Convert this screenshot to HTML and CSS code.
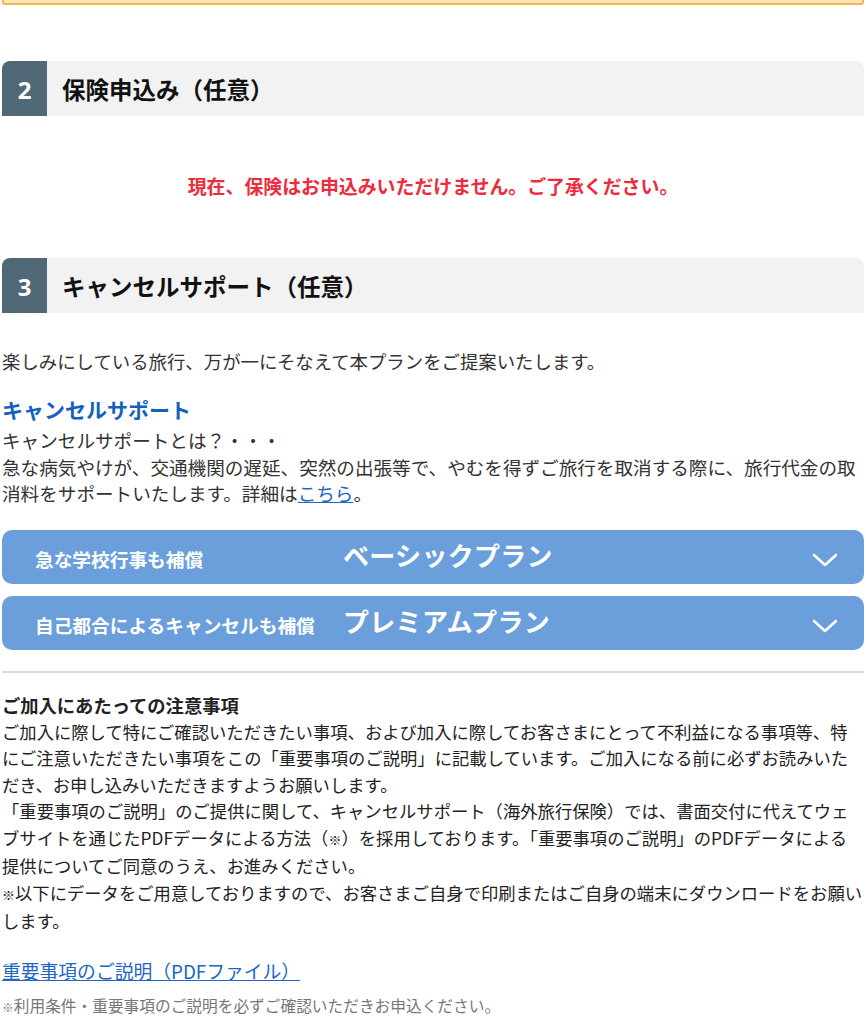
FILE: index.html
```html
<!DOCTYPE html>
<html lang="ja">
<head>
<meta charset="utf-8">
<link rel="stylesheet" href="styles.css">
</head>
<body>
<div class="prev-box"></div>

<div class="sec-head sec-first">
  <div class="sec-num">2</div>
  <div class="sec-title">保険申込み（任意）</div>
</div>

<p class="alert">現在、保険はお申込みいただけません。ご了承ください。</p>

<div class="sec-head">
  <div class="sec-num">3</div>
  <div class="sec-title">キャンセルサポート（任意）</div>
</div>

<p class="lead">楽しみにしている旅行、万が一にそなえて本プランをご提案いたします。</p>

<h3 class="sub-title">キャンセルサポート</h3>
<p class="body-text">キャンセルサポートとは？・・・<br>急な病気やけが、交通機関の遅延、突然の出張等で、やむを得ずご旅行を取消する際に、旅行代金の取消料をサポートいたします。詳細は<a class="link" href="#">こちら</a>。</p>

<div class="plans">
  <div class="plan">
    <span class="plan-label">急な学校行事も補償</span>
    <span class="plan-name">ベーシックプラン</span>
    <svg class="chev" width="26" height="14" viewBox="0 0 26 14"><polyline points="2,2 13,12 24,2" fill="none" stroke="#fff" stroke-width="2.6" stroke-linecap="round" stroke-linejoin="round"/></svg>
  </div>
  <div class="plan">
    <span class="plan-label">自己都合によるキャンセルも補償</span>
    <span class="plan-name">プレミアムプラン</span>
    <svg class="chev" width="26" height="14" viewBox="0 0 26 14"><polyline points="2,2 13,12 24,2" fill="none" stroke="#fff" stroke-width="2.6" stroke-linecap="round" stroke-linejoin="round"/></svg>
  </div>
</div>

<hr class="divider">

<div class="notes">
  <p class="notes-title">ご加入にあたっての注意事項</p>
  <p class="notes-body">ご加入に際して特にご確認いただきたい事項、および加入に際してお客さまにとって不利益になる事項等、特<br>にご注意いただきたい事項をこの「重要事項のご説明」に記載しています。ご加入になる前に必ずお読みいた<br>だき、お申し込みいただきますようお願いします。<br>「重要事項のご説明」のご提供に関して、キャンセルサポート（海外旅行保険）では、書面交付に代えてウェ<br>ブサイトを通じたPDFデータによる方法（<span class="kome">※</span>）を採用しております。「重要事項のご説明」のPDFデータによる<br>提供についてご同意のうえ、お進みください。<br><span class="kome">※</span>以下にデータをご用意しておりますので、お客さまご自身で印刷またはご自身の端末にダウンロードをお願い<br>します。</p>
</div>

<p class="pdf"><a class="link" href="#">重要事項のご説明（PDFファイル）</a></p>
<p class="foot-note"><span class="kome">※</span>利用条件・重要事項のご説明を必ずご確認いただきお申込ください。</p>
</body>
</html>
```

FILE: styles.css
```css
html, body {
  margin: 0;
  padding: 0;
  background: #fff;
}
body {
  padding: 0 2px;
  font-family: "Noto Sans CJK JP", "Noto Sans", sans-serif;
  color: #333;
}
p, h3 { margin: 0; }

.prev-box {
  height: 3px;
  background: #fde4bb;
  border: 2px solid #f8b54c;
  border-top: none;
  border-radius: 0 0 3px 3px;
}

.sec-head {
  display: flex;
  height: 55px;
  margin-top: 58px;
}
.sec-first { margin-top: 56px; }
.sec-num {
  width: 45px;
  background: #506875;
  color: #fff;
  border-top-left-radius: 8px;
  display: flex;
  align-items: center;
  justify-content: center;
  font-family: "Noto Sans", sans-serif;
  font-weight: 700;
  font-size: 24px;
  padding-top: 2px;
  box-sizing: border-box;
}
.sec-title {
  flex: 1;
  background: #f2f2f2;
  border-top-right-radius: 8px;
  display: flex;
  align-items: center;
  padding-left: 15px;
  font-size: 23.5px;
  font-weight: 700;
  color: #111;
}

.alert {
  margin-top: 56px;
  text-align: center;
  color: #ee2b3b;
  font-weight: 700;
  font-size: 18.9px;
  line-height: 28px;
}

.lead {
  margin-top: 35px;
  font-size: 18.4px;
  line-height: 27px;
}
.sub-title {
  margin-top: 19px;
  color: #1560bd;
  font-size: 21px;
  font-weight: 700;
  line-height: 30px;
}
.body-text {
  margin-top: 3px;
  font-size: 18.6px;
  line-height: 26.7px;
}
.link {
  color: #2166c4;
  text-decoration: underline;
  text-underline-offset: 1px;
}

.plans {
  margin-top: 23px;
  display: flex;
  flex-direction: column;
  gap: 12px;
}
.plan {
  height: 54px;
  background: #6a9fdc;
  border-radius: 10px;
  display: grid;
  grid-template-columns: 308px 1fr auto;
  align-items: center;
  padding: 0 26px 0 33px;
  color: #fff;
  font-weight: 700;
}
.plan-label {
  font-size: 18.7px;
  padding-top: 2px;
}
.plan-name {
  font-size: 26px;
  margin-top: -6px;
  letter-spacing: 0.3px;
}
.chev { display: block; margin-top: 6px; }

.divider {
  margin: 21px 0 0;
  border: none;
  border-top: 2px solid #dcdcdc;
  height: 0;
}

.notes {
  margin-top: 19px;
  color: #222;
}
.notes-title {
  font-size: 18.3px;
  font-weight: 700;
  line-height: 26.5px;
}
.notes-body {
  font-size: 17.3px;
  letter-spacing: 0.04px;
  line-height: 26.5px;
  white-space: nowrap;
}
.kome { font-size: 0.75em; }

.pdf {
  margin-top: 22px;
  font-size: 18.8px;
  line-height: 27px;
}
.foot-note {
  margin-top: 10px;
  font-size: 15.7px;
  line-height: 24px;
  color: #777;
}
```
